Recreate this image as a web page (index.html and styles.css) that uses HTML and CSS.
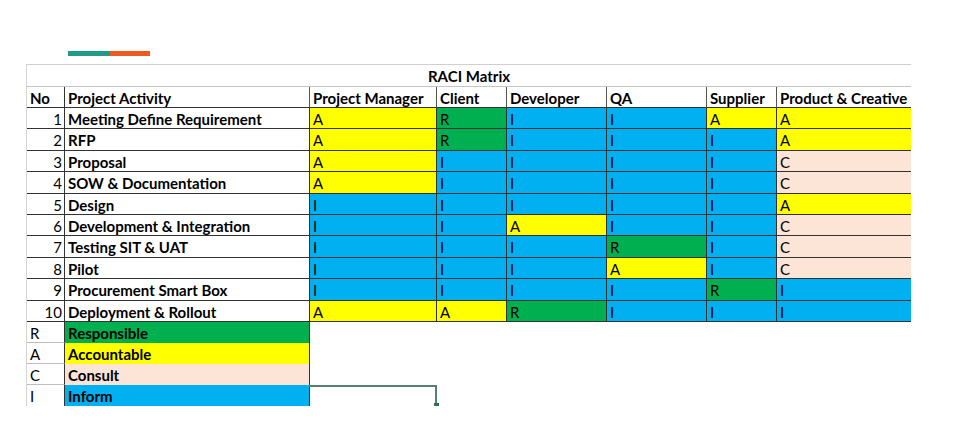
FILE: index.html
```html
<!DOCTYPE html>
<html>
<head>
<meta charset="utf-8">
<link rel="stylesheet" href="styles.css">
</head>
<body>
<div class="page">
  <div class="accent"><span class="teal"></span><span class="orange"></span></div>
  <div class="sheet">
    <div class="grid">
      <div class="title">RACI Matrix<span class="colsel"></span></div>

      <div class="c h no">No</div>
      <div class="c h">Project Activity</div>
      <div class="c h">Project Manager</div>
      <div class="c h">Client</div>
      <div class="c h">Developer</div>
      <div class="c h">QA</div>
      <div class="c h">Supplier</div>
      <div class="c h last">Product &amp; Creative</div>

      <div class="c num">1</div><div class="c act">Meeting Define Requirement</div>
      <div class="c y">A</div><div class="c g">R</div><div class="c b">I</div><div class="c b">I</div><div class="c y">A</div><div class="c y last">A</div>

      <div class="c num">2</div><div class="c act">RFP</div>
      <div class="c y">A</div><div class="c g">R</div><div class="c b">I</div><div class="c b">I</div><div class="c b">I</div><div class="c y last">A</div>

      <div class="c num">3</div><div class="c act">Proposal</div>
      <div class="c y">A</div><div class="c b">I</div><div class="c b">I</div><div class="c b">I</div><div class="c b">I</div><div class="c p last">C</div>

      <div class="c num">4</div><div class="c act">SOW &amp; Documentation</div>
      <div class="c y">A</div><div class="c b">I</div><div class="c b">I</div><div class="c b">I</div><div class="c b">I</div><div class="c p last">C</div>

      <div class="c num">5</div><div class="c act">Design</div>
      <div class="c b">I</div><div class="c b">I</div><div class="c b">I</div><div class="c b">I</div><div class="c b">I</div><div class="c y last">A</div>

      <div class="c num">6</div><div class="c act">Development &amp; Integration</div>
      <div class="c b">I</div><div class="c b">I</div><div class="c y">A</div><div class="c b">I</div><div class="c b">I</div><div class="c p last">C</div>

      <div class="c num">7</div><div class="c act">Testing SIT &amp; UAT</div>
      <div class="c b">I</div><div class="c b">I</div><div class="c b">I</div><div class="c g">R</div><div class="c b">I</div><div class="c p last">C</div>

      <div class="c num">8</div><div class="c act">Pilot</div>
      <div class="c b">I</div><div class="c b">I</div><div class="c b">I</div><div class="c y">A</div><div class="c b">I</div><div class="c p last">C</div>

      <div class="c num">9</div><div class="c act">Procurement Smart Box</div>
      <div class="c b">I</div><div class="c b">I</div><div class="c b">I</div><div class="c b">I</div><div class="c g">R</div><div class="c b last">I</div>

      <div class="c num">10</div><div class="c act">Deployment &amp; Rollout</div>
      <div class="c y">A</div><div class="c y">A</div><div class="c g">R</div><div class="c b">I</div><div class="c b">I</div><div class="c b last">I</div>

      <div class="c key">R</div><div class="c lab g">Responsible</div><div class="blank"></div>
      <div class="c key">A</div><div class="c lab y">Accountable</div><div class="blank"></div>
      <div class="c key">C</div><div class="c lab p">Consult</div><div class="blank"></div>
      <div class="c key">I</div><div class="c lab b">Inform</div><div class="blank"><div class="selected"><span class="handle"></span></div></div>
    </div>
  </div>
</div>
</body>
</html>
```

FILE: styles.css
```css
* { box-sizing: border-box; }
html, body { margin: 0; padding: 0; background: #fff; }
body {
  font-family: Lato, "Open Sans", sans-serif;
  color: #000;
  width: 960px;
  height: 448px;
  overflow: hidden;
}
.page {
  padding-top: 51px;
  padding-left: 26px;
}
.accent {
  display: flex;
  margin-left: 42px;
  height: 5px;
}
.teal { width: 42px; background: #1f9a86; }
.orange { width: 40px; background: #ee5a20; }
.sheet {
  margin-top: 8px;
  width: 885px;
  height: 342px;
  overflow: hidden;
  border-left: 1px solid #d4d4d4;
  border-top: 1px solid #d0d0d0;
}
.grid {
  display: grid;
  grid-template-columns: 38px 245px 127px 70px 100px 100px 70px 134px;
  grid-template-rows: 22px 21px 21px 22px 21px 22px 21px 21px 22px 21px 22px 21px 21px 21px 21px 22px;
  font-size: 15px;
}
.title {
  grid-column: 1 / -1;
  position: relative;
  text-align: center;
  font-weight: 700;
  line-height: 22px;
  border-bottom: 1px solid #c4c4c4;
}
.colsel {
  position: absolute;
  left: 283px;
  top: -1px;
  width: 127px;
  height: 1px;
  background: #7d9b8f;
}
.c {
  border-right: 1px solid #333;
  border-bottom: 1px solid #333;
  padding: 0 3px;
  line-height: 22px;
  white-space: nowrap;
  overflow: hidden;
}
.h { font-weight: 700; border-right-color: #555; }
.no { border-right-color: #333; }
.last { border-right: none; }
.num { text-align: right; padding-right: 2px; }
.act { font-weight: 700; }
.y { background: #ffff00; }
.g { background: #00b050; }
.b { background: #00b0f0; }
.p { background: #fce4d6; }
.key { border-bottom-color: #bdbdbd; }
.lab { font-weight: 700; border-bottom: none; }
.blank { grid-column: 3 / -1; position: relative; }
.selected {
  position: absolute;
  left: -1px;
  top: 0;
  width: 128px;
  height: 22px;
  border-top: 2px solid #56806e;
  border-right: 2px solid #56806e;
}
.handle {
  position: absolute;
  right: -4px;
  bottom: -1px;
  width: 5px;
  height: 5px;
  background: #2f6f50;
}
```
